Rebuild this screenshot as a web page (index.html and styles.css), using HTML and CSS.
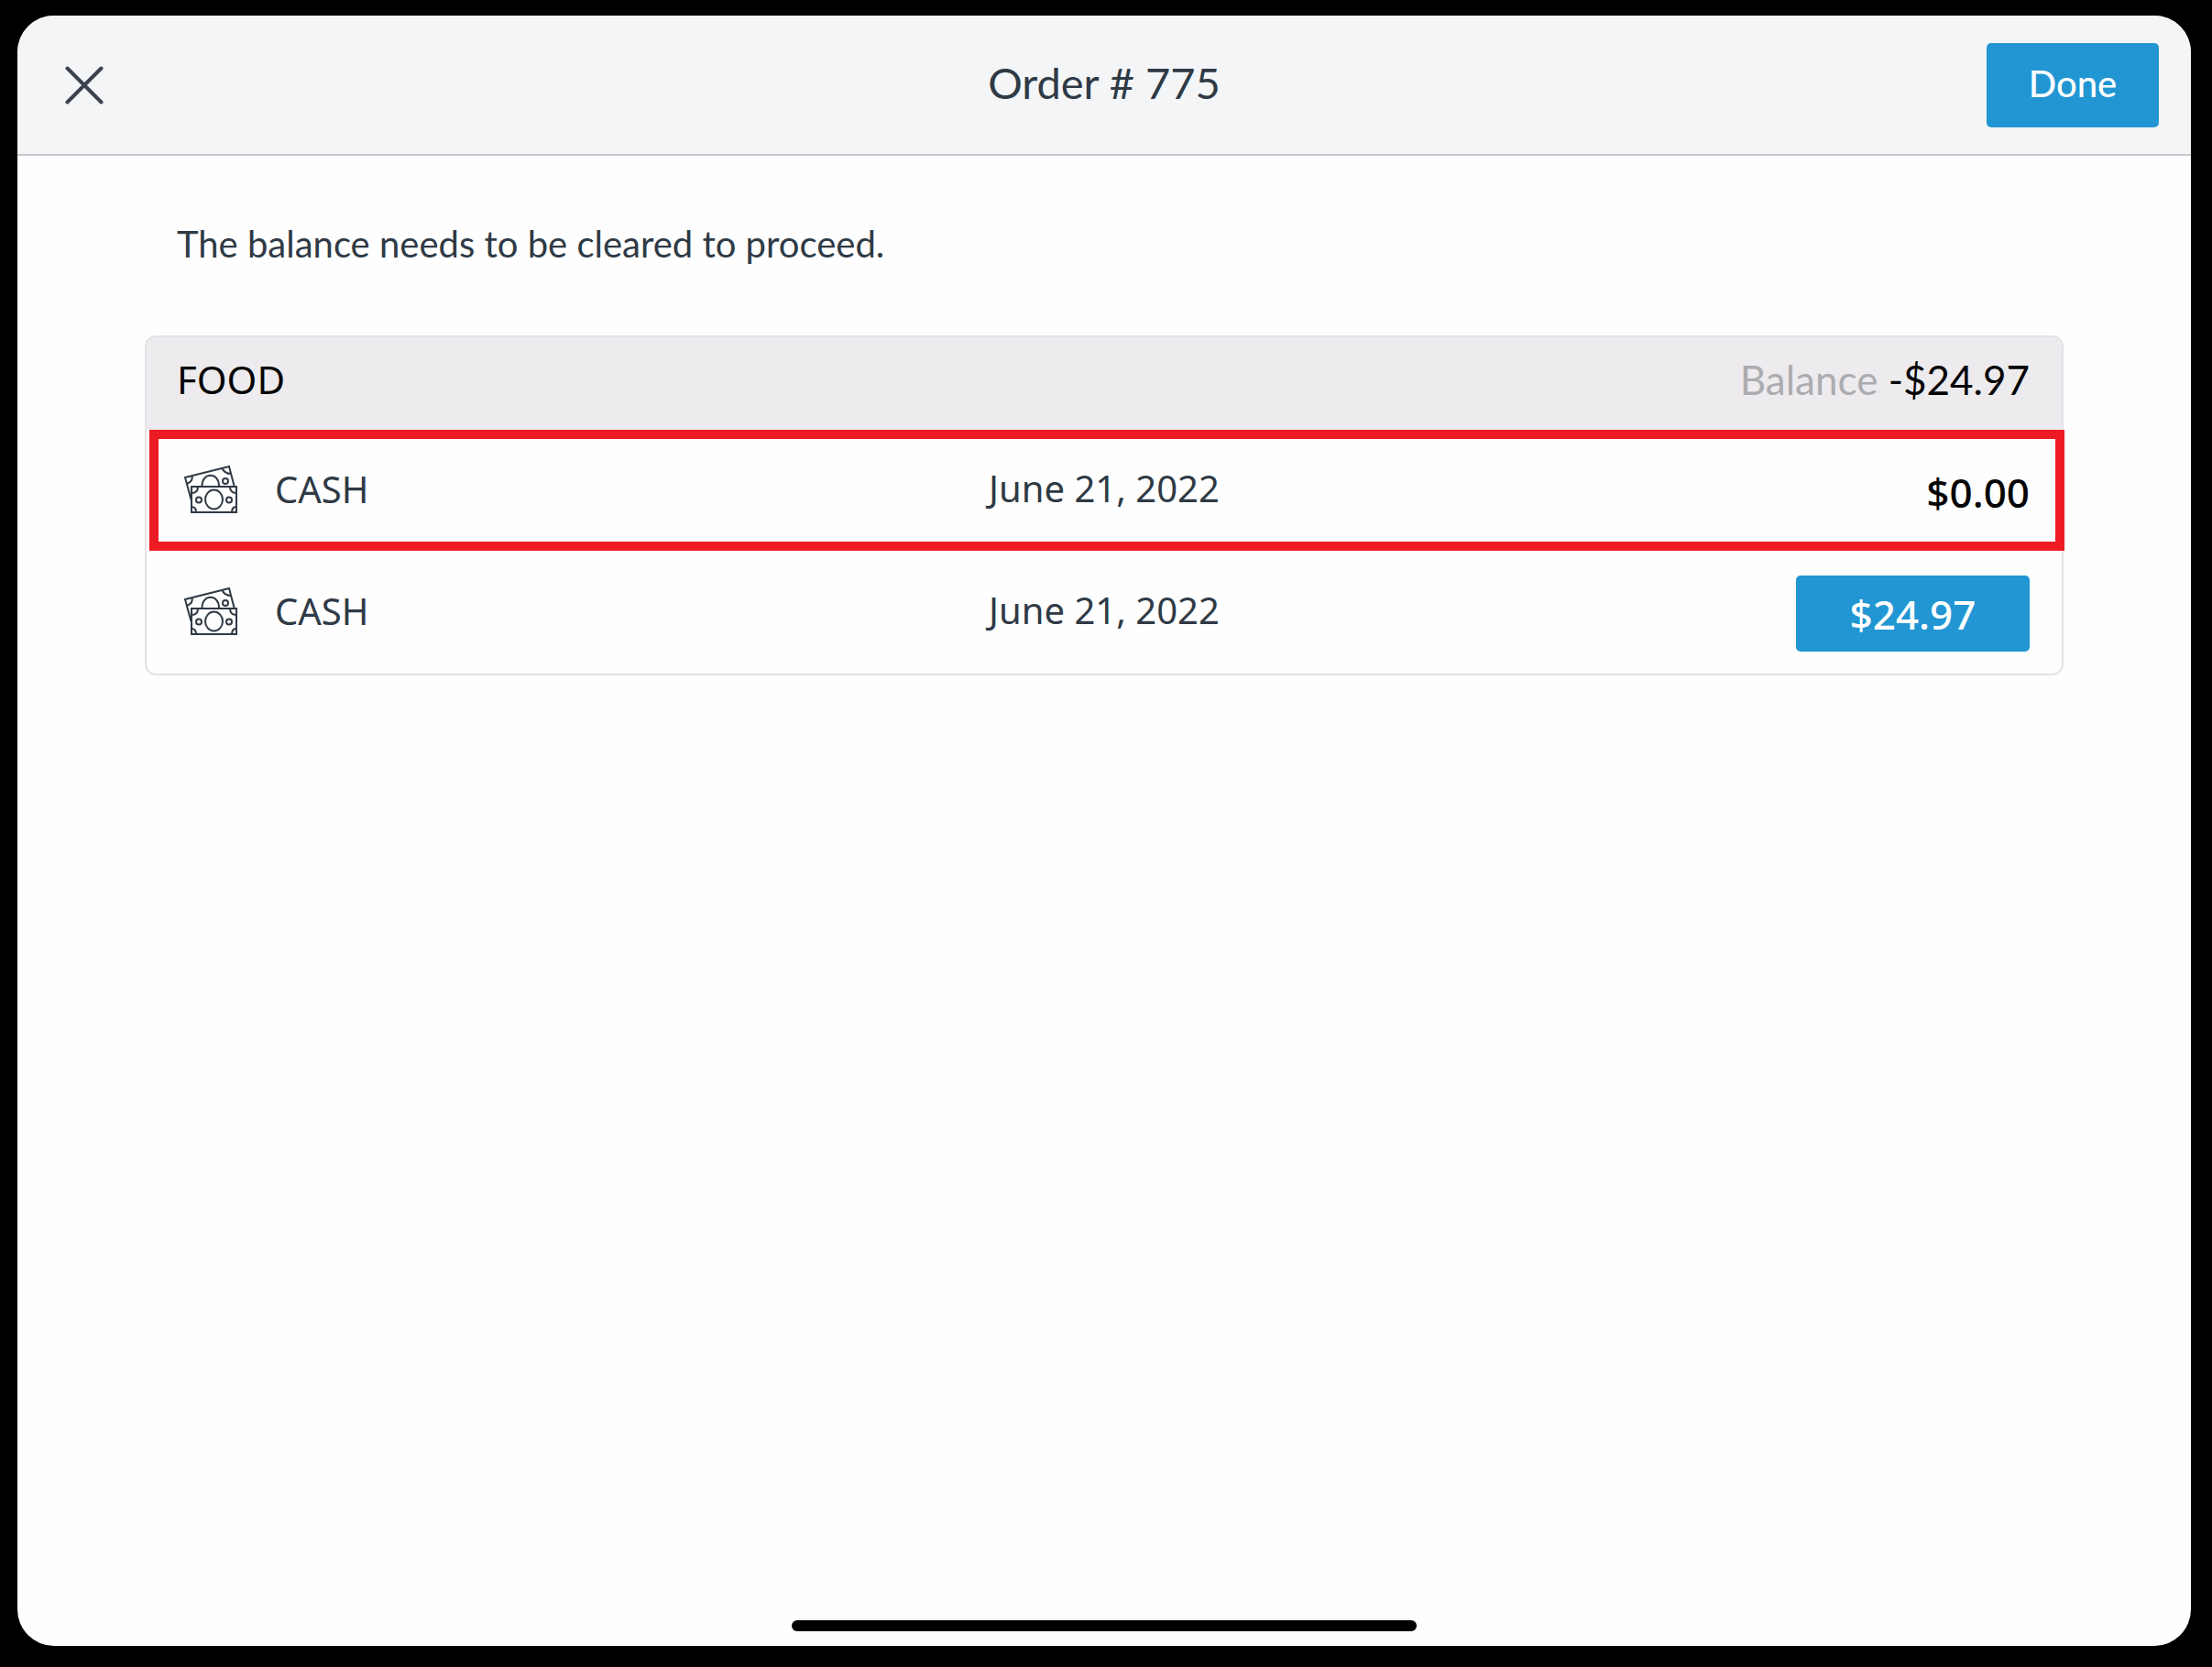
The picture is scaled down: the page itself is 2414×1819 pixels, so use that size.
FILE: index.html
```
<!DOCTYPE html>
<html lang="en">
<head>
    <meta charset="utf-8">
    <title>Order # 775</title>
    <link rel="stylesheet" href="styles.css">
</head>
<body>
    <svg class="symbols" aria-hidden="true">
        <symbol id="cashIcon" viewBox="0 0 60 54">
            <g fill="none" stroke="currentColor" stroke-width="2">
                <!-- back note -->
                <path d="M8.5 38L2 14L50 2L55.500 23"/>
                <path d="M4 21Q11 18 9.500 12M42.500 4Q45 10 52.500 10"/>
                <path d="M20.500 23C20.500 8 39 8 39 23"/>
                <circle cx="46" cy="18" r="3"/>
                <!-- front note -->
                <path d="M9 24H58V52H9Z"/>
                <path d="M9 31Q16 31 16 24M51 24Q51 31 58 31M9 46Q14 46 14 52M53 52Q53 46 58 46"/>
                <ellipse cx="33.500" cy="38" rx="9.500" ry="10.500"/>
                <circle cx="17" cy="38.500" r="3"/>
                <circle cx="50" cy="38.500" r="3"/>
            </g>
        </symbol>
    </svg>

    <div class="screen">
        <header class="topbar">
            <button class="close-button" aria-label="Close">
                <svg class="close-icon" viewBox="0 0 42 42">
                    <path d="M2.500 2.500L39.500 39.500M39.500 2.500L2.500 39.500"/>
                </svg>
            </button>
            <h1 class="title">Order # 775</h1>
            <button class="button done-button">Done</button>
        </header>

        <main class="content">
            <p class="notice">The balance needs to be cleared to proceed.</p>

            <section class="card">
                <div class="card-header">
                    <h2 class="card-title">FOOD</h2>
                    <div><span class="balance-label">Balance</span> -$24.97</div>
                </div>
                <table class="payments">
                    <tr class="highlighted">
                        <td>
                            <div class="method">
                                <svg class="cash-icon"><use href="#cashIcon"/></svg>
                                <span>CASH</span>
                            </div>
                        </td>
                        <td class="date">June 21, 2022</td>
                        <td class="amount">$0.00</td>
                    </tr>
                    <tr>
                        <td>
                            <div class="method">
                                <svg class="cash-icon"><use href="#cashIcon"/></svg>
                                <span>CASH</span>
                            </div>
                        </td>
                        <td class="date">June 21, 2022</td>
                        <td class="amount"><button class="button amount-button">$24.97</button></td>
                    </tr>
                </table>
            </section>
        </main>

        <div class="home-indicator"></div>
    </div>
</body>
</html>
```
FILE: styles.css
```
* {
    box-sizing: border-box;
}

body {
    display: flex;
    min-height: 100vh;
    margin: 0;
    padding: 17px 23px 23px 19px;
    font-family: Lato, "Noto Sans", sans-serif;
    font-size: 40px;
    line-height: 48px;
    background: #000;
    color: #2f3a45;
}

button {
    font-family: inherit;
    cursor: pointer;
}

.symbols {
    position: absolute;
    width: 0;
    height: 0;
}

.screen {
    flex: 1;
    display: flex;
    flex-direction: column;
    background: #fefefe;
    border-radius: 40px;
    overflow: hidden;
}

.topbar {
    display: grid;
    grid-template-columns: 1fr auto 1fr;
    align-items: center;
    height: 153px;
    padding: 0 35px;
    background: #f4f5f7;
    border-bottom: 2px solid #c5c8cf;
}

.close-button {
    justify-self: start;
    display: flex;
    margin-left: 17px;
    padding: 0;
    background: none;
    border: none;
    color: #39424e;
}

.close-icon {
    width: 42px;
    height: 42px;
    fill: none;
    stroke: currentColor;
    stroke-width: 4;
    stroke-linecap: round;
}

.title {
    margin: 0;
    padding-bottom: 6px;
    font-size: 47px;
    font-weight: 400;
}

.button {
    padding: 0;
    background: #2196d3;
    border: none;
    border-radius: 5px;
    color: #fff;
    font-weight: 500;
}

.done-button {
    justify-self: end;
    width: 188px;
    height: 92px;
    padding-bottom: 3px;
    font-size: 40px;
}

.content {
    flex: 1;
    padding: 72px 139px;
}

.notice {
    margin: 0 35px 76px;
}

.card {
    border: 2px solid #e4e2e6;
    border-radius: 12px;
}

.card-header {
    display: flex;
    justify-content: space-between;
    height: 101px;
    padding: 22px 35px 0 33px;
    background: #edebee;
    border-radius: 10px 10px 0 0;
    font-size: 44px;
    color: #050505;
}

.card-title {
    margin: 0;
    font-family: "Noto Sans", sans-serif;
    font-size: 42px;
    font-weight: 400;
}

.balance-label {
    color: #acacb0;
}

.payments {
    width: 100%;
    table-layout: fixed;
    border-collapse: collapse;
    font-family: "Noto Sans", sans-serif;
}

.payments tr {
    position: relative;
    height: 133px;
}

.payments td {
    padding: 0;
}

.highlighted td:first-child::after {
    content: "";
    position: absolute;
    inset: 0 -3px 1px 3px;
    border: 10px solid #ed1c24;
}

.method {
    display: flex;
    align-items: center;
    gap: 40px;
    padding: 0 0 4px 40px;
}

.cash-icon {
    width: 60px;
    height: 54px;
}

.payments .date {
    padding-bottom: 6px;
    text-align: center;
}

.payments .amount {
    padding: 2px 35px 0 0;
    text-align: right;
    font-size: 44px;
    font-weight: 500;
    color: #050505;
}

.amount-button {
    width: 255px;
    height: 83px;
    font-size: 44px;
    vertical-align: middle;
}

.home-indicator {
    align-self: center;
    width: 682px;
    max-width: 60%;
    height: 12px;
    margin-bottom: 16px;
    background: #000;
    border-radius: 6px;
}
```
